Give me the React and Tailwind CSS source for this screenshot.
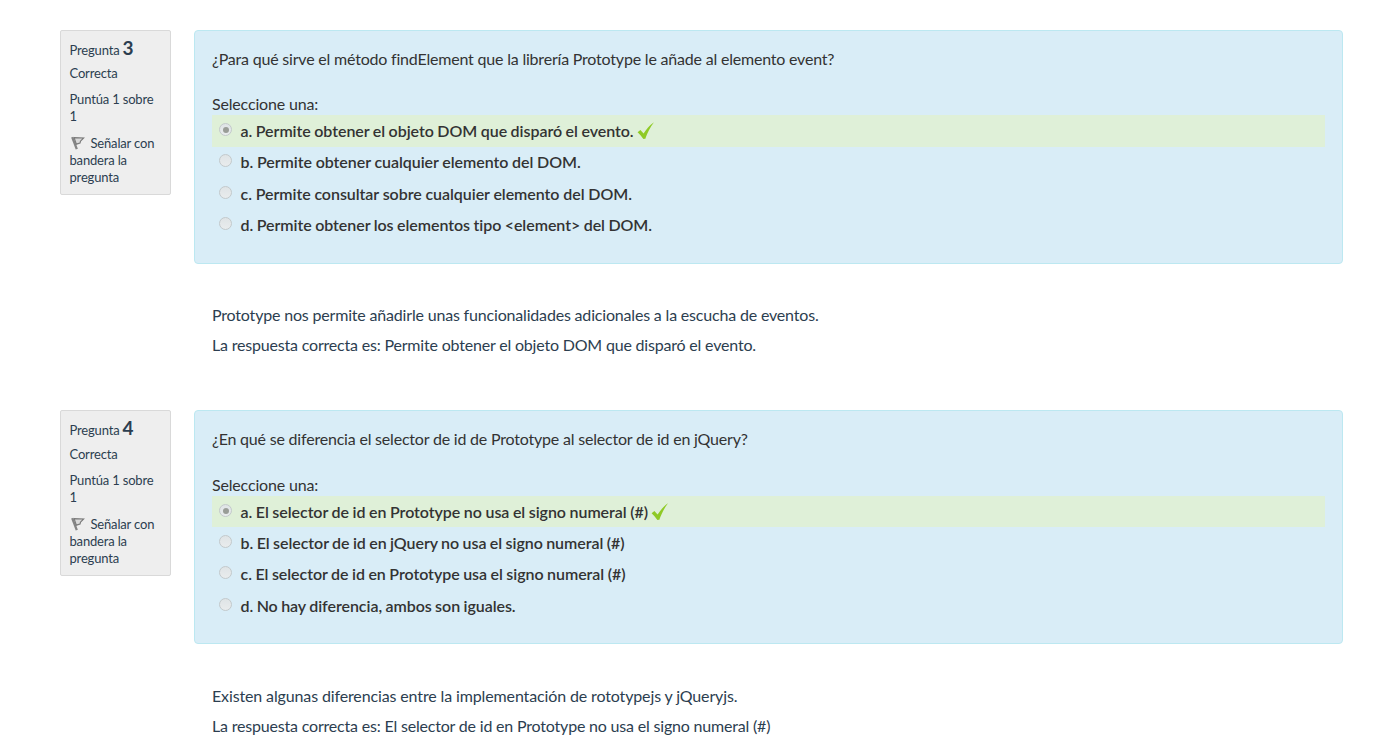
const questions = [
  {
    number: "3",
    prompt: "¿Para qué sirve el método findElement que la librería Prototype le añade al elemento event?",
    answers: [
      "a. Permite obtener el objeto DOM que disparó el evento.",
      "b. Permite obtener cualquier elemento del DOM.",
      "c. Permite consultar sobre cualquier elemento del DOM.",
      "d. Permite obtener los elementos tipo <element> del DOM.",
    ],
    feedback: "Prototype nos permite añadirle unas funcionalidades adicionales a la escucha de eventos.",
    solution: "La respuesta correcta es: Permite obtener el objeto DOM que disparó el evento.",
    offset: "h-[22px]",
    rows: ["h-8 leading-8", "h-[31px] leading-[30px]", "h-[31px] leading-8", "h-8 leading-8"],
    radios: ["mt-2", "mt-[7px]", "mt-2", "mt-2"],
    spacing: [
      "[word-spacing:-0.4px]",
      "[word-spacing:-0.2px]",
      "[word-spacing:-0.15px]",
      "[word-spacing:-0.45px]",
    ],
    infoGap: "mt-[5px]",
    infoHeight: "h-[165px]",
    feedbackGap: "mt-9",
    feedbackSpacing: "tracking-[-0.18px]",
  },
  {
    number: "4",
    prompt: "¿En qué se diferencia el selector de id de Prototype al selector de id en jQuery?",
    answers: [
      "a. El selector de id en Prototype no usa el signo numeral (#)",
      "b. El selector de id en jQuery no usa el signo numeral (#)",
      "c. El selector de id en Prototype usa el signo numeral (#)",
      "d. No hay diferencia, ambos son iguales.",
    ],
    feedback: "Existen algunas diferencias entre la implementación de rototypejs y jQueryjs.",
    solution: "La respuesta correcta es: El selector de id en Prototype no usa el signo numeral (#)",
    offset: "h-[23px]",
    rows: ["h-[31px] leading-8", "h-[31px] leading-8", "h-8 leading-8", "h-[31px] leading-8"],
    radios: ["mt-2", "mt-2", "mt-2", "mt-2"],
    spacing: [
      "[word-spacing:-0.35px]",
      "[word-spacing:-0.5px]",
      "[word-spacing:-0.4px]",
      "[word-spacing:-0.5px]",
    ],
    infoGap: "mt-[6px]",
    infoHeight: "h-[166px]",
    feedbackGap: "mt-[37px]",
    feedbackSpacing: "tracking-[-0.13px]",
  },
];

function Check() {
  return (
    <svg className="ml-[3px] h-[18px] w-[18px] shrink-0" viewBox="0 0 18 18">
      <path d="M0.6 10.2 L3.4 8.1 L6.6 11.6 C9.3 7.2 12.3 3.7 17 0.3 C13.2 5.2 10.6 10.6 8.2 17 Q7.2 16.6 6.4 17.1 Q4 13.2 0.6 10.2Z" fill="#8fca25" />
    </svg>
  );
}

function Flag() {
  return (
    <svg className="mr-[6px] ml-px inline-block h-[14px] w-[14px] align-[-2px]" viewBox="0 0 14 14">
      <path d="M1.2 1.2 L5.8 13.2" stroke="#858585" strokeWidth="2.3" fill="none" />
      <path d="M3.1 1.7 L12.6 2 L9.5 5.2 L9 7.1 L5.3 8.2Z" fill="#d9d9d9" stroke="#7b7b7b" strokeWidth="1.2" />
    </svg>
  );
}

function Radio({ checked, gap }) {
  return (
    <span className={`ml-[7px] flex h-[13px] w-[13px] shrink-0 items-center justify-center rounded-full border border-[#c3c9cb] bg-linear-to-b from-[#dfe4e6] to-[#e9eced] ${gap}`}>
      {checked && <span className="h-[6px] w-[6px] rounded-full bg-[#999d97]" />}
    </span>
  );
}

function Question({ q }) {
  return (
    <section className="flex h-[380px] items-start">
      <aside className={`w-[111px] shrink-0 rounded-[2px] border border-[#d9d9d9] bg-[#eeeeee] pt-[5px] pl-[8.5px] text-[13px] leading-[17px] tracking-[-0.17px] text-[#2c3e50] ${q.infoHeight}`}>
        <h3 className="h-6 leading-6 whitespace-nowrap">
          Pregunta <span className="text-[19px] font-bold">{q.number}</span>
        </h3>
        <p className={q.infoGap}>Correcta</p>
        <p className="mt-[9px] w-[90px]">Puntúa 1 sobre 1</p>
        <p className="mt-[10px] w-[90px]"><Flag />Señalar con bandera la pregunta</p>
      </aside>
      <div className="ml-[23px] w-[1149px]">
        <div className="h-[234px] rounded-[4px] border border-[#bce8f1] bg-[#d9edf7] px-[17px] pt-[17px] text-[#333]">
          <p className="h-6 leading-[22px] tracking-[-0.2px] whitespace-nowrap">{q.prompt}</p>
          <div className={q.offset} />
          <p className="h-[21px] leading-[20px] tracking-[-0.17px]">Seleccione una:</p>
          {q.answers.map((a, i) => (
            <div key={a} className={`flex ${q.rows[i]} ${i === 0 ? "bg-[#dff0d8]" : ""}`}>
              <Radio checked={i === 0} gap={q.radios[i]} />
              <span className={`ml-[8.5px] font-semibold tracking-[-0.05px] whitespace-nowrap ${q.spacing[i]}`}>{a}</span>
              {i === 0 && <span className="flex pt-[7px]"><Check /></span>}
            </div>
          ))}
        </div>
        <div className={`pl-[18px] leading-[30px] text-[#2c3e50] ${q.feedbackGap}`}>
          <p className={q.feedbackSpacing}>{q.feedback}</p>
          <p className="tracking-[-0.19px]">{q.solution}</p>
        </div>
      </div>
    </section>
  );
}

export default function App() {
  return (
    <main className="h-[742px] overflow-hidden bg-white pt-[30px] pl-[60px] font-['Lato',sans-serif] text-[16px]">
      {questions.map((q) => <Question key={q.number} q={q} />)}
    </main>
  );
}
